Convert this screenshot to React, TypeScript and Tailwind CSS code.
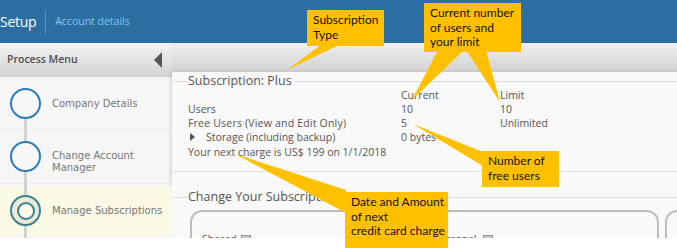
import React from "react";

const mainFont = { fontFamily: '"Open Sans", "Noto Sans", sans-serif' };
const sideFont = { fontFamily: '"DejaVu Sans", "Noto Sans", sans-serif' };
const noteFont = { fontFamily: 'Lato, "Liberation Sans", sans-serif' };

function Circle({ active }: { active?: boolean }) {
  if (active) {
    return (
      <div className="relative z-10 ml-[10px] flex h-[31px] w-[31px] shrink-0 items-center justify-center rounded-full border-2 border-[#3a8196] bg-[#ecebd9]">
        <div className="h-[18px] w-[18px] rounded-full border-2 border-[#3a8196] bg-[#fcfce9]" />
      </div>
    );
  }
  return (
    <div className="relative z-10 ml-[10px] h-[31px] w-[31px] shrink-0 rounded-full border-2 border-[#2c7bbb] bg-[#f7f7f7]" />
  );
}

function Legend({ text }: { text: string }) {
  return (
    <div className="flex h-[17px] items-center">
      <div className="mt-[2px] h-px w-[15px] bg-[#dcdcdc]" />
      <div className="px-[1px] text-[12.5px] leading-[17px] text-[#555]">{text}</div>
      <div className="mt-[2px] ml-[2px] h-px flex-1 bg-[#dcdcdc]" />
    </div>
  );
}

function Note({ className, lines }: { className: string; lines: string[] }) {
  return (
    <div
      className={"absolute bg-[#ffc000] px-[6px] py-[3px] text-[12px] leading-[14.6px] text-[#111] " + className}
      style={noteFont}
    >
      {lines.map((l, i) => (
        <div key={i} className="whitespace-nowrap">
          {l}
        </div>
      ))}
    </div>
  );
}

function Help() {
  return (
    <span className="mt-[3px] flex h-[10px] w-[10px] items-center justify-center border border-[#999] bg-[#c8c8c8] text-[7px] leading-none text-[#555]">
      ?
    </span>
  );
}

export default function App() {
  return (
    <div className="relative h-[250px] w-[677px] overflow-hidden bg-white" style={mainFont}>
      <div className="flex h-[238px] flex-col overflow-hidden">
        {/* header */}
        <div className="flex h-[43px] shrink-0 items-center bg-[#2b6ea2]">
          <span className="text-[14px] leading-none tracking-[-0.3px] text-white">Setup</span>
          <div className="mx-[9px] h-[24px] w-px bg-[#5b94c2]" />
          <span className="text-[10.5px] leading-none text-[#8ec2ea]">Account details</span>
        </div>

        <div className="flex flex-1">
          {/* sidebar */}
          <div className="flex w-[172px] shrink-0 flex-col bg-[#f6f6f6]" style={sideFont}>
            <div className="flex h-[34px] items-center justify-between bg-gradient-to-b from-[#f3f3f3] to-[#d3d3d3] pl-[7px] pr-[10px]">
              <span className="text-[10.5px] font-semibold text-[#505050]" style={mainFont}>
                Process Menu
              </span>
              <div className="h-0 w-0 border-y-[8px] border-r-[8px] border-y-transparent border-r-[#555]" />
            </div>
            <div className="relative flex flex-col">
              <div className="absolute left-[24px] top-[26px] bottom-0 w-[3px] bg-[#d2d2d2]" />
              <div className="flex h-[53px] items-center border-b border-[#e7e7ec]">
                <Circle />
                <span className="ml-[11px] text-[10px] leading-[13px] text-[#777]">Company Details</span>
              </div>
              <div className="flex h-[54px] items-center border-b border-[#e7e7ec]">
                <Circle />
                <span className="ml-[11px] mt-[11px] text-[10px] leading-[12.5px] text-[#777]">
                  Change Account
                  <br />
                  Manager
                </span>
              </div>
              <div className="mt-[2px] flex h-[49px] items-center bg-[#f9f9e4]">
                <Circle active />
                <span className="ml-[11px] whitespace-nowrap text-[10px] leading-[13px] text-[#777]">
                  Manage Subscriptions
                </span>
              </div>
              <div className="h-[10px] bg-[#f6f6f6]" />
            </div>
          </div>

          {/* main */}
          <div className="flex flex-1 flex-col">
            <div className="h-[29px] shrink-0 bg-gradient-to-b from-[#efefef] to-[#d2d2d2]" />
            <div className="flex flex-1 flex-col bg-[#f9f9f9] shadow-[-2px_0_3px_rgba(0,0,0,0.12)]">
              <div className="h-[100px] shrink-0 border-b border-[#e3e3e3]">
                <Legend text="Subscription: Plus" />
                <div className="mt-[-1px] grid grid-cols-[213px_99px_1fr] pl-[16px] text-[10.5px] leading-[14px] text-[#555]">
                  <div />
                  <div>Current</div>
                  <div>Limit</div>
                  <div>Users</div>
                  <div>10</div>
                  <div>10</div>
                  <div className="whitespace-nowrap tracking-[0.2px]">Free Users (View and Edit Only)</div>
                  <div>5</div>
                  <div>Unlimited</div>
                  <div className="flex items-center whitespace-nowrap">
                    <div className="ml-[2px] mr-[11px] h-0 w-0 border-y-[4px] border-l-[5px] border-y-transparent border-l-[#555]" />
                    Storage (including backup)
                  </div>
                  <div>0 bytes</div>
                  <div />
                  <div className="col-span-3 mt-[1px] whitespace-nowrap">Your next charge is US$ 199 on 1/1/2018</div>
                </div>
              </div>
              <div className="pt-[16px]">
                <Legend text="Change Your Subscription:" />
                <div className="mt-[5px] flex gap-[6px] pl-[18px]">
                  <div className="flex h-[80px] w-[469px] shrink-0 rounded-[12px] border-2 border-[#bdbdbd] pt-[20px] pl-[10px] text-[10.5px] text-[#555]">
                    <div className="flex w-[232px] items-start gap-[4px]">
                      <span>Shared</span>
                      <Help />
                    </div>
                    <div className="flex items-start gap-[6px]">
                      <span>Personal</span>
                      <Help />
                    </div>
                  </div>
                  <div className="h-[80px] w-[60px] shrink-0 rounded-[12px] border-2 border-[#bdbdbd]" />
                </div>
              </div>
            </div>
          </div>
        </div>
      </div>

      {/* callout pointers */}
      <svg className="pointer-events-none absolute left-0 top-0" width="677" height="250" viewBox="0 0 677 250">
        <polygon points="321,45 339,45 287,70" fill="#ffc000" />
        <polygon points="438,50 464,50 412,100" fill="#ffc000" />
        <polygon points="466,50 486,50 500,102" fill="#ffc000" />
        <polygon points="483,152 483,166 413,124" fill="#ffc000" />
        <polygon points="346,190 346,213 235,154" fill="#ffc000" />
      </svg>

      <Note className="left-[307px] top-[10px] h-[36px] w-[77px]" lines={["Subscription", "Type"]} />
      <Note className="left-[424px] top-[3px] h-[49px] w-[97px]" lines={["Current number", "of users and", "your limit"]} />
      <Note className="left-[482px] top-[151px] h-[36px] w-[77px]" lines={["Number of", "free users"]} />
      <Note
        className="left-[345px] top-[192px] h-[56px] w-[103px]"
        lines={["Date and Amount", "of next", "credit card charge"]}
      />
    </div>
  );
}
